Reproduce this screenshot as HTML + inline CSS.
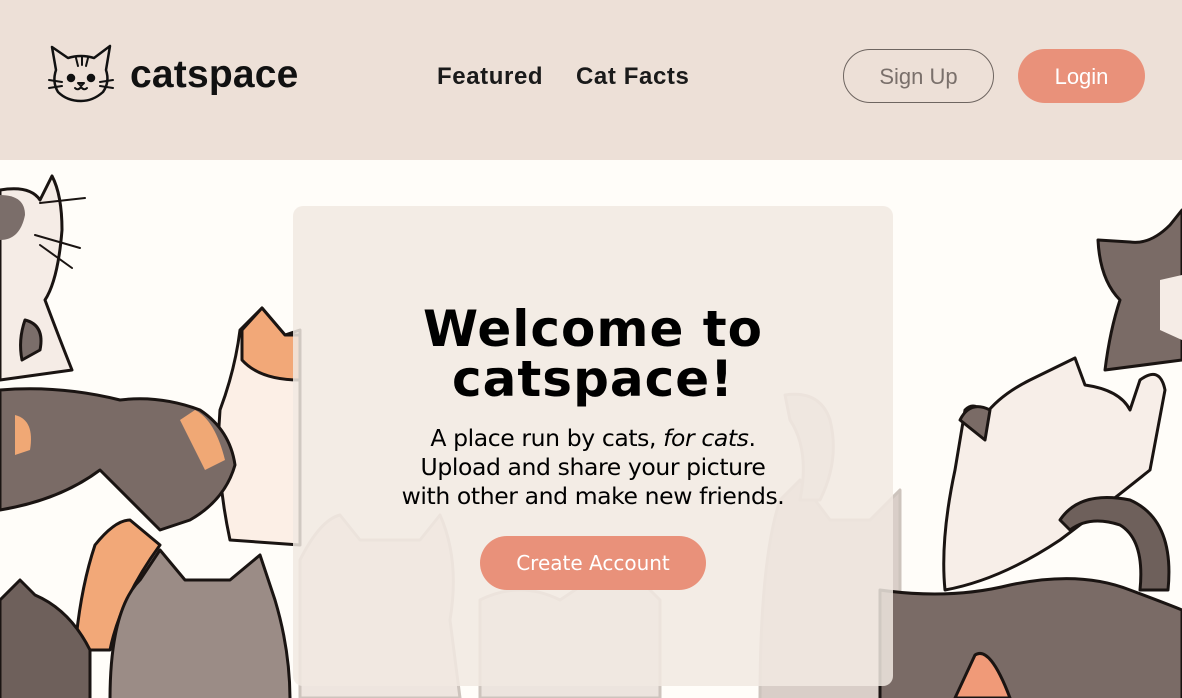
<!DOCTYPE html>
<html><head><meta charset="utf-8"><style>
*{margin:0;padding:0;box-sizing:border-box}
body{width:1182px;height:698px;overflow:hidden;background:#fffdf9;font-family:"DejaVu Sans","Liberation Sans",sans-serif;position:relative}
header{position:absolute;left:0;top:0;width:1182px;height:160px;background:#ede0d7}
.logo{position:absolute;left:48px;top:42px}
.brand{position:absolute;left:130px;top:53px;font:bold 39px "Liberation Sans",sans-serif;letter-spacing:0.2px;color:#111}
.nav{position:absolute;top:63px;font-size:24px;font-weight:600;color:#1a1a1a;letter-spacing:0.6px;font-family:"Liberation Sans",sans-serif}
.btn{position:absolute;border-radius:30px;font-family:"Liberation Sans",sans-serif;font-size:22px;text-align:center}
#bg{position:absolute;left:0;top:160px}
.card{position:absolute;left:293px;top:206px;width:600px;height:480px;border-radius:10px;background:rgba(241,233,226,0.85)}
h1{position:absolute;left:293px;top:304px;width:600px;text-align:center;font:bold 50px/50px "DejaVu Sans",sans-serif;letter-spacing:1px;color:#000}
p{position:absolute;left:283px;top:424px;width:620px;text-align:center;font:500 23.5px/29px "DejaVu Sans",sans-serif;color:#000;letter-spacing:-0.4px}
</style></head><body>
<svg id="bg" width="1182" height="538" viewBox="0 160 1182 538" fill="none" stroke="#1a1412" stroke-width="3" stroke-linejoin="round" stroke-linecap="round">
<path d="M0 190 Q30 185 40 200 L52 176 Q62 195 62 230 Q58 280 45 300 Q60 340 72 370 L0 380Z" fill="#f5ece6"/>
<path d="M0 195 Q25 195 25 215 Q20 240 0 240Z" fill="#7b6e6a" stroke="none"/>
<path d="M25 320 Q45 325 40 350 L22 360 Q18 340 25 320Z" fill="#7b6e6a"/>
<path d="M40 203 L85 198 M35 235 L80 248 M40 245 L72 268" stroke-width="2"/>
<path d="M240 330 L262 308 L285 335 L300 330 L300 545 L230 540 Q215 470 220 410 Q235 370 240 330Z" fill="#fcefe6"/>
<path d="M242 330 L262 308 L285 335 L300 335 L300 380 Q260 380 242 360Z" fill="#f2a878"/>
<path d="M0 390 Q60 385 120 400 Q160 395 200 410 Q230 430 235 465 Q225 500 190 520 L160 530 Q130 500 100 470 Q60 500 0 510Z" fill="#7a6b66"/>
<path d="M15 415 Q35 420 30 450 L15 455Z" fill="#f0a875" stroke="none"/>
<path d="M195 410 Q215 420 225 460 L205 470 Q190 440 180 420Z" fill="#f0a875" stroke="none"/>
<path d="M95 545 Q115 520 130 520 L160 545 Q120 600 110 650 L75 650 Q80 590 95 545Z" fill="#f2a878"/>
<path d="M110 700 Q110 610 140 580 L160 550 L185 580 L230 580 L260 555 L275 600 Q290 650 290 700Z" fill="#9b8c86"/>
<path d="M0 700 L0 600 L20 580 L35 595 Q70 610 90 650 L90 700Z" fill="#6e605b"/>
<g stroke="#b8aca5" stroke-width="3" opacity="0.7">
<path d="M300 560 Q320 520 340 515 L360 540 L420 540 L440 515 Q460 560 450 620 L460 698 L300 698Z" fill="#e7dcd5"/>
<path d="M760 700 Q760 560 780 500 L800 480 L830 520 L870 520 L900 490 L900 700Z" fill="#c9bbb4"/>
<path d="M785 395 Q820 390 830 420 Q840 460 820 500 L800 500 Q810 450 790 420Z" fill="#d8ccc5"/>
<path d="M480 600 Q520 580 560 600 L620 560 L660 600 L660 698 L480 698Z" fill="#e5dad3"/>
</g>
<path d="M1182 210 L1170 225 Q1150 245 1130 242 L1098 240 Q1100 280 1120 300 Q1110 330 1105 370 L1182 360Z" fill="#7a6b66"/>
<path d="M1160 280 L1182 275 L1182 340 L1160 330Z" fill="#f5ece6" stroke="none"/>
<path d="M1030 380 L1075 358 L1085 385 Q1120 390 1130 410 L1140 380 Q1160 365 1165 390 L1150 470 Q1100 510 1060 540 Q1000 580 945 590 Q940 540 955 470 L965 410 Q975 400 985 415 Q1000 395 1030 380Z" fill="#f7eee8"/>
<path d="M960 420 Q970 400 990 410 L985 440 Z" fill="#7a6b66"/>
<path d="M1060 520 Q1080 490 1130 500 Q1175 520 1168 590 L1140 590 Q1145 540 1120 525 Q1090 515 1070 530Z" fill="#6e605b"/>
<path d="M880 700 L880 590 Q950 600 1010 585 Q1080 570 1130 590 Q1170 605 1182 610 L1182 700Z" fill="#7a6b66"/>
<path d="M955 698 L975 655 Q990 645 1010 698Z" fill="#f09a78"/>
</svg>
<header>
<svg class="logo" width="66" height="62" viewBox="0 0 66 62" fill="none" stroke="#111" stroke-width="2.5" stroke-linecap="round" stroke-linejoin="round">
<path d="M8 28 L4 5 L20 16 Q33 12 46 16 L62 4 L58 28 Q62 40 55 50 Q45 59 33 59 Q19 59 10 50 Q4 40 8 28Z"/>
<path d="M28 16 L30 24 M34 15 L34 23 M40 16 L38 24" stroke-width="2"/>
<circle cx="23" cy="36" r="3" fill="#111"/><circle cx="43" cy="36" r="3" fill="#111"/>
<path d="M30 41 L36 41 L33 44Z M27 46 Q30 49 33 45 Q36 49 39 46" stroke-width="2"/>
<path d="M1 38 L14 40 M1 46 L14 44 M65 38 L52 40 M65 46 L52 44" stroke-width="2"/>
</svg>
<div class="brand">catspace</div>
<div class="nav" style="left:437px">Featured</div>
<div class="nav" style="left:576px">Cat Facts</div>
<div class="btn" style="left:843px;top:49px;width:151px;height:54px;border:1px solid #6e6560;color:#7a706b;line-height:54px">Sign Up</div>
<div class="btn" style="left:1018px;top:49px;width:127px;height:54px;background:#e9917a;color:#fff;line-height:56px">Login</div>
</header>
<div class="card"></div>
<h1>Welcome to<br>catspace!</h1>
<p>A place run by cats, <i>for cats</i>.<br>Upload and share your picture<br>with other and make new friends.</p>
<div class="btn" style="left:480px;top:536px;width:226px;height:54px;background:#e9917a;color:#fff;line-height:54px;font-family:'DejaVu Sans',sans-serif;font-size:20px">Create Account</div>
</body></html>
